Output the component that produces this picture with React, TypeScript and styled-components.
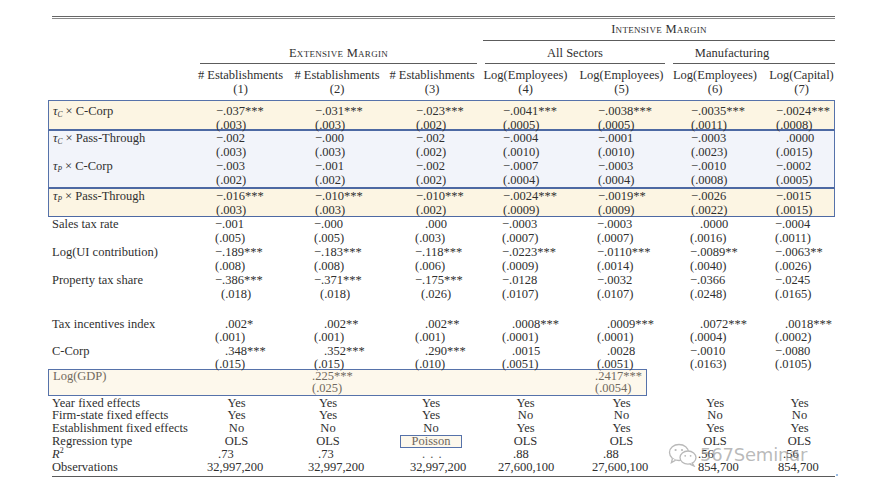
import styled, { createGlobalStyle } from 'styled-components'

const GlobalStyle = createGlobalStyle`
  html, body {
    margin: 0;
    padding: 0;
    background: #fff;
  }
  body {
    font-family: "Liberation Serif", "Times New Roman", serif;
    color: #2f2f2f;
  }
`

// label + seven model columns
const COLS = '147px 93px 96px 94px 95px 95px 92px 75px'
// where the numbers start inside each column
const PAD = [20, 26, 31, 24, 24, 22, 15]
// small left/right nudges for centred header text
const HEAD_SHIFT = [-1, 1, 1, 0, 1, 1, 4]
const FOOT_SHIFT = [-5, -8, 0, 0, 1, 1, 2]

const Page = styled.div`
  position: relative;
  width: 874px;
  height: 487px;
  overflow: hidden;
  box-sizing: border-box;
  padding: 16px 0 0 48px;
  background: #fff;
`

const Table = styled.div`
  width: 787px;
  font-size: 12.5px;
`

const DoubleRule = styled.div`
  margin-left: 4px;
  height: 1px;
  border-top: 1.5px solid #666;
  border-bottom: 1.5px solid #8a8a8a;
`

const HeadGrid = styled.div<{ $pt: number; $pb: number }>`
  display: grid;
  grid-template-columns: ${COLS};
  line-height: 14px;
  padding: ${p => p.$pt}px 0 ${p => p.$pb}px;
`

const GroupGrid = styled.div<{ $pt: number; $pb: number }>`
  display: grid;
  grid-template-columns: ${COLS};
  line-height: 14px;
  > div {
    padding: ${p => p.$pt}px 0 ${p => p.$pb}px;
  }
`

const GroupHead = styled.div<{ $col: string; $ml: number; $mr: number; $caps?: boolean; $pr?: number }>`
  grid-column: ${p => p.$col};
  margin: ${p => `0 ${p.$mr}px 0 ${p.$ml}px`};
  border-bottom: 1.5px solid #5c5c5c;
  text-align: center;
  white-space: nowrap;
  font-variant: ${p => (p.$caps ? 'small-caps' : 'normal')};
  letter-spacing: ${p => (p.$caps ? '0.3px' : '0')};

  && {
    padding-right: ${p => p.$pr || 0}px;
  }
`

const HeadCell = styled.div<{ $shift: number }>`
  text-align: center;
  white-space: nowrap;
  padding-left: ${p => Math.max(0, p.$shift * 2)}px;
  padding-right: ${p => Math.max(0, -p.$shift * 2)}px;
`

const Box = styled.div<{ $tone: 'cream' | 'blue'; $top?: boolean; $bottom: number; $pt?: number; $pull?: number }>`
  background: ${p => (p.$tone === 'cream' ? '#fcf5e3' : '#f2f4fa')};
  border: 1.5px solid #5672aa;
  border-top-width: ${p => (p.$top ? '1.5px' : '0')};
  border-bottom-width: ${p => p.$bottom}px;
  border-bottom-color: ${p => (p.$bottom > 2 ? '#39558f' : '#4d69a3')};
  padding-top: ${p => p.$pt || 0}px;

  > div:last-child {
    margin-bottom: ${p => -(p.$pull || 0)}px;
  }
`

const Row = styled.div<{ $lh?: number; $mt?: number }>`
  display: grid;
  grid-template-columns: ${COLS};
  line-height: ${p => p.$lh || 14}px;
  margin-top: ${p => p.$mt || 0}px;
`

const Label = styled.div`
  padding-left: 4px;
  white-space: nowrap;
`

const Val = styled.div<{ $pad: number }>`
  padding-left: ${p => p.$pad}px;
  white-space: nowrap;
`

const Line = styled.div<{ $indent: number }>`
  padding-left: ${p => p.$indent}px;
`

const GdpBox = styled.div`
  width: 599px;
  box-sizing: border-box;
  margin-top: -3px;
  background: #fdf8ec;
  border: 1.5px solid #5672aa;
  color: #716a60;
`

const GdpGrid = styled.div`
  display: grid;
  grid-template-columns: 145px 93px 96px 94px 95px 73px;
  line-height: 12.5px;
`

const Footer = styled.div`
  margin-top: 1px;
`

const FootCell = styled.div<{ $shift?: number; $left?: number }>`
  white-space: nowrap;
  text-align: ${p => (p.$left !== undefined ? 'left' : 'center')};
  padding-left: ${p => (p.$left !== undefined ? p.$left : Math.max(0, (p.$shift || 0) * 2))}px;
  padding-right: ${p => (p.$left !== undefined ? 0 : Math.max(0, -(p.$shift || 0) * 2))}px;
`

const Poisson = styled.span`
  display: inline-block;
  padding: 0 11px;
  line-height: 11px;
  background: #fdf8ec;
  border: 1.5px solid #5672aa;
  color: #6e675d;
`

const Dots = styled.span`
  color: #555;
  letter-spacing: 1px;
`

const BottomRule = styled.div`
  position: relative;
  margin: 3px 0 0 4px;
  border-top: 1.5px solid #5a5a5a;

  &::after {
    content: '';
    position: absolute;
    right: -3px;
    top: -3px;
    width: 2px;
    height: 2px;
    border-radius: 1px;
    background: #7aa7dc;
  }
`

const Greek = styled.i`
  font-style: italic;
`

const Sub = styled.sub`
  font-size: 7.5px;
  font-style: italic;
  line-height: 0;
  vertical-align: -2px;
  margin-right: 3px;
`

const Sup = styled.sup`
  font-size: 8px;
  line-height: 0;
  vertical-align: 5px;
`

const Watermark = styled.div`
  position: absolute;
  left: 668px;
  top: 443px;
  display: flex;
  align-items: center;
  gap: 2px;
  pointer-events: none;
`

const WatermarkText = styled.span`
  font-family: "DejaVu Sans", "Noto Sans", sans-serif;
  font-size: 18px;
  letter-spacing: -0.2px;
  color: rgba(140, 140, 140, 0.6);
  line-height: 24px;
`

type Coef = [string, string] | null

interface DataRow {
  label: React.ReactNode
  cells: Coef[]
  seIndent?: number
}

const tau = (s: string, rest: string) => (
  <>
    <Greek>τ</Greek>
    <Sub>{s}</Sub>× {rest}
  </>
)

const boxTop: DataRow[] = [
  {
    label: tau('C', 'C-Corp'),
    cells: [
      ['−.037***', '(.003)'], ['−.031***', '(.003)'], ['−.023***', '(.002)'],
      ['−.0041***', '(.0005)'], ['−.0038***', '(.0005)'], ['−.0035***', '(.0011)'], ['−.0024***', '(.0008)'],
    ],
  },
]

const boxMiddle: DataRow[] = [
  {
    label: tau('C', 'Pass-Through'),
    cells: [
      ['−.002', '(.003)'], ['−.000', '(.003)'], ['−.002', '(.002)'],
      ['−.0004', '(.0010)'], ['−.0001', '(.0010)'], ['−.0003', '(.0023)'], ['.0000', '(.0015)'],
    ],
  },
  {
    label: tau('P', 'C-Corp'),
    cells: [
      ['−.003', '(.002)'], ['−.001', '(.002)'], ['−.002', '(.002)'],
      ['−.0007', '(.0004)'], ['−.0003', '(.0004)'], ['−.0010', '(.0008)'], ['−.0002', '(.0005)'],
    ],
  },
]

const boxBottom: DataRow[] = [
  {
    label: tau('P', 'Pass-Through'),
    cells: [
      ['−.016***', '(.003)'], ['−.010***', '(.003)'], ['−.010***', '(.002)'],
      ['−.0024***', '(.0009)'], ['−.0019**', '(.0009)'], ['−.0026', '(.0022)'], ['−.0015', '(.0015)'],
    ],
  },
]

const controls: DataRow[] = [
  {
    label: 'Sales tax rate',
    cells: [
      ['−.001', '(.005)'], ['−.000', '(.005)'], ['.000', '(.003)'],
      ['−.0003', '(.0007)'], ['−.0003', '(.0007)'], ['.0000', '(.0016)'], ['−.0004', '(.0011)'],
    ],
  },
  {
    label: 'Log(UI contribution)',
    cells: [
      ['−.189***', '(.008)'], ['−.183***', '(.008)'], ['−.118***', '(.006)'],
      ['−.0223***', '(.0009)'], ['−.0110***', '(.0014)'], ['−.0089**', '(.0040)'], ['−.0063**', '(.0026)'],
    ],
  },
  {
    label: 'Property tax share',
    seIndent: 6,
    cells: [
      ['−.386***', '(.018)'], ['−.371***', '(.018)'], ['−.175***', '(.026)'],
      ['−.0128', '(.0107)'], ['−.0032', '(.0107)'], ['−.0366', '(.0248)'], ['−.0245', '(.0165)'],
    ],
  },
]

const firmRows: DataRow[] = [
  {
    label: 'Tax incentives index',
    cells: [
      ['.002*', '(.001)'], ['.002**', '(.001)'], ['.002**', '(.001)'],
      ['.0008***', '(.0001)'], ['.0009***', '(.0001)'], ['.0072***', '(.0004)'], ['.0018***', '(.0002)'],
    ],
  },
  {
    label: 'C-Corp',
    cells: [
      ['.348***', '(.015)'], ['.352***', '(.015)'], ['.290***', '(.010)'],
      ['.0015', '(.0051)'], ['.0028', '(.0051)'], ['−.0010', '(.0163)'], ['−.0080', '(.0105)'],
    ],
  },
]

const gdpCells: Coef[] = [null, ['.225***', '(.025)'], null, null, ['.2417***', '(.0054)']]

const titles = ['# Establishments', '# Establishments', '# Establishments', 'Log(Employees)', 'Log(Employees)', 'Log(Employees)', 'Log(Capital)']

const R2_LEFT = [23, 30, 38, 35, 30, 30, 23]
const OBS_LEFT = [12, 20, 26, 20, 19, 30, 18]

function CoefCell({ cell, col, seIndent = 0 }: { cell: Coef; col: number; seIndent?: number }) {
  if (!cell) return <Val $pad={PAD[col]} />
  const positive = !cell[0].startsWith('−')
  return (
    <Val $pad={PAD[col]}>
      <Line $indent={positive ? 10 : 0}>{cell[0]}</Line>
      <Line $indent={seIndent}>{cell[1]}</Line>
    </Val>
  )
}

function DataRows({ rows, lh, mt }: { rows: DataRow[]; lh?: number; mt?: number }) {
  return (
    <>
      {rows.map((r, i) => (
        <Row key={i} $lh={lh} $mt={i === 0 ? mt : 0}>
          <Label>{r.label}</Label>
          {r.cells.map((c, j) => (
            <CoefCell key={j} cell={c} col={j} seIndent={j < 3 ? r.seIndent : 0} />
          ))}
        </Row>
      ))}
    </>
  )
}

function WeChatMark() {
  return (
    <svg width="30" height="24" viewBox="0 0 30 24" fill="none" stroke="#b9b9b9" strokeWidth="1.3">
      <ellipse cx="11" cy="9.5" rx="9.5" ry="8" fill="#fff" />
      <path d="M4.5 15.5 L3.4 19.6 L7.6 17.2" fill="#fff" />
      <circle cx="7.6" cy="7" r="1.1" fill="#b9b9b9" stroke="none" />
      <circle cx="14" cy="7" r="1.1" fill="#b9b9b9" stroke="none" />
      <ellipse cx="20" cy="14.6" rx="8" ry="6.6" fill="#fff" />
      <path d="M24.2 20.2 L26 23 L21.8 21.1" fill="#fff" />
      <circle cx="17.2" cy="12.8" r="0.9" fill="#b9b9b9" stroke="none" />
      <circle cx="22.6" cy="12.8" r="0.9" fill="#b9b9b9" stroke="none" />
    </svg>
  )
}

export default function App() {
  const footer: { label: React.ReactNode; vals: React.ReactNode[]; mode: 'center' | 'r2' | 'obs' }[] = [
    { label: 'Year fixed effects', vals: ['Yes', 'Yes', 'Yes', 'Yes', 'Yes', 'Yes', 'Yes'], mode: 'center' },
    { label: 'Firm-state fixed effects', vals: ['Yes', 'Yes', 'Yes', 'No', 'No', 'No', 'No'], mode: 'center' },
    { label: 'Establishment fixed effects', vals: ['No', 'No', 'No', 'Yes', 'Yes', 'Yes', 'Yes'], mode: 'center' },
    { label: 'Regression type', vals: ['OLS', 'OLS', <Poisson key="p">Poisson</Poisson>, 'OLS', 'OLS', 'OLS', 'OLS'], mode: 'center' },
    {
      label: (
        <>
          <i>R</i>
          <Sup>2</Sup>
        </>
      ),
      vals: ['.73', '.73', <Dots key="d">. . .</Dots>, '.88', '.88', '.56', '.56'],
      mode: 'r2',
    },
    { label: 'Observations', vals: ['32,997,200', '32,997,200', '32,997,200', '27,600,100', '27,600,100', '854,700', '854,700'], mode: 'obs' },
  ]

  return (
    <Page>
      <GlobalStyle />
      <Table>
        <DoubleRule />

        <GroupGrid $pt={3} $pb={4}>
          <GroupHead $col="5 / 9" $ml={5} $mr={0} $caps>
            Intensive Margin
          </GroupHead>
        </GroupGrid>

        <GroupGrid $pt={4.5} $pb={3.5}>
          <GroupHead $col="2 / 5" $ml={5} $mr={1} $caps>
            Extensive Margin
          </GroupHead>
          <GroupHead $col="5 / 7" $ml={7} $mr={3}>
            All Sectors
          </GroupHead>
          <GroupHead $col="7 / 9" $ml={5} $mr={0} $pr={44}>
            Manufacturing
          </GroupHead>
        </GroupGrid>

        <HeadGrid $pt={3.5} $pb={4}>
          <div />
          {titles.map((t, i) => (
            <HeadCell key={i} $shift={HEAD_SHIFT[i]}>
              {t}
              <br />({i + 1})
            </HeadCell>
          ))}
        </HeadGrid>

        <Box $tone="cream" $top $bottom={2} $pt={3.5} $pull={3}>
          <DataRows rows={boxTop} />
        </Box>
        <Box $tone="blue" $bottom={2}>
          <DataRows rows={boxMiddle} />
        </Box>
        <Box $tone="cream" $bottom={1.5} $pull={1}>
          <DataRows rows={boxBottom} />
        </Box>

        <DataRows rows={controls} />
        <DataRows rows={firmRows} lh={13.5} mt={16.5} />

        <GdpBox>
          <GdpGrid>
            <Label>Log(GDP)</Label>
            {gdpCells.map((c, j) => (
              <Val key={j} $pad={PAD[j] - 1}>
                {c && (
                  <>
                    <div>{c[0]}</div>
                    <div>{c[1]}</div>
                  </>
                )}
              </Val>
            ))}
          </GdpGrid>
        </GdpBox>

        <Footer>
          {footer.map((f, i) => (
            <Row key={i} $lh={12.8}>
              <Label>{f.label}</Label>
              {f.vals.map((v, j) => (
                <FootCell
                  key={j}
                  $shift={FOOT_SHIFT[j]}
                  $left={f.mode === 'r2' ? R2_LEFT[j] : f.mode === 'obs' ? OBS_LEFT[j] : undefined}
                >
                  {v}
                </FootCell>
              ))}
            </Row>
          ))}
        </Footer>

        <BottomRule />
      </Table>

      <Watermark>
        <WeChatMark />
        <WatermarkText>567Seminar</WatermarkText>
      </Watermark>
    </Page>
  )
}
